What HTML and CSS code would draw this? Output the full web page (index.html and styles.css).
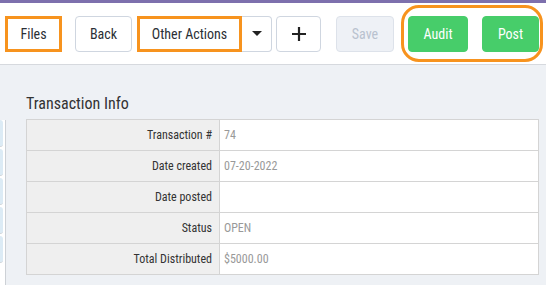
FILE: index.html
```html
<!DOCTYPE html>
<html lang="en">
<head>
    <meta charset="UTF-8">
    <title>Transaction</title>
    <link rel="stylesheet" href="styles.css">
</head>
<body>
    <div class="topbar"></div>
    <div class="toolbar">
        <button class="btn btn-files marked">Files</button>
        <button class="btn btn-back">Back</button>
        <div class="btn-group">
            <button class="btn btn-other marked">Other Actions</button>
            <button class="btn btn-caret"><span class="caret"></span></button>
        </div>
        <button class="btn btn-add">
            <svg width="16" height="16" viewBox="0 0 16 16"><path d="M8 1v14M1 8h14" stroke="#222" stroke-width="2.2" fill="none"/></svg>
        </button>
        <button class="btn btn-save" disabled>Save</button>
        <div class="highlight-group">
            <button class="btn btn-green btn-audit">Audit</button>
            <button class="btn btn-green btn-post">Post</button>
        </div>
    </div>

    <div class="main">
        <div class="side-list">
            <div class="side-item"></div>
            <div class="side-item"></div>
            <div class="side-item"></div>
            <div class="side-item"></div>
            <div class="side-item"></div>
        </div>

        <div class="content">
            <h2>Transaction Info</h2>
            <table class="info-table">
                <tr><th>Transaction #</th><td>74</td></tr>
                <tr><th>Date created</th><td>07-20-2022</td></tr>
                <tr><th>Date posted</th><td></td></tr>
                <tr><th>Status</th><td>OPEN</td></tr>
                <tr><th>Total Distributed</th><td>$5000.00</td></tr>
            </table>
        </div>
    </div>
</body>
</html>
```

FILE: styles.css
```css
body {
    margin: 0;
    font-family: "Roboto Condensed", "Liberation Sans Narrow", "DejaVu Sans Condensed", Roboto, sans-serif;
    font-stretch: condensed;
    background-color: #eef1f5;
    height: 285px;
    overflow: hidden;
}

.topbar {
    height: 3px;
    background-color: #7d70ad;
}

.toolbar {
    display: flex;
    align-items: center;
    height: 61px;
    padding-left: 5px;
    background: #fff;
    border-bottom: 1px solid #d6d9de;
}

.btn {
    height: 36px;
    padding: 0;
    font-family: inherit;
    font-size: 14px;
    color: #2b2f36;
    background: #fff;
    border: 1px solid #cfd6e0;
    border-radius: 4px;
    box-sizing: border-box;
    cursor: pointer;
}

.btn.marked {
    border: 3px solid #f7931e;
    border-radius: 0;
}

.btn-files {
    width: 57px;
}

.btn-back {
    width: 57px;
    margin-left: 13px;
}

.btn-group {
    display: flex;
    margin-left: 5px;
}

.btn-other {
    width: 105px;
}

.btn-caret {
    width: 30px;
    border-left: none;
    border-radius: 0 4px 4px 0;
    display: flex;
    align-items: center;
    justify-content: center;
}

.caret {
    width: 0;
    height: 0;
    border-left: 5px solid transparent;
    border-right: 5px solid transparent;
    border-top: 5px solid #222;
}

.btn-add {
    width: 45px;
    margin-left: 4px;
    display: flex;
    align-items: center;
    justify-content: center;
}

.btn-save {
    width: 58px;
    margin-left: 15px;
    background: #eef1f6;
    color: #b9c2cf;
    border-color: #dde2ea;
}

.highlight-group {
    display: flex;
    margin-left: 7px;
    padding: 8px 1px 7px 4px;
    border: 3px solid #f7931e;
    border-radius: 18px;
}

.btn-green {
    background: #47cd6a;
    border-color: #47cd6a;
    color: #fff;
}

.btn-audit {
    width: 60px;
}

.btn-post {
    width: 57px;
    margin-left: 14px;
}

.main {
    display: flex;
    align-items: flex-start;
}

.side-list {
    width: 5px;
    margin-top: 55px;
    height: 165px;
    background: #fff;
    border-right: 1px solid #cdd1d6;
}

.side-item {
    height: 26px;
    margin-bottom: 2px;
    width: 3px;
    background: #dcebf5;
    border-radius: 0 3px 3px 0;
    border-bottom: 1px solid #cfd3d8;
}

.content {
    padding-left: 20px;
}

.content h2 {
    margin: 29px 0 6px;
    font-size: 16px;
    font-weight: normal;
    line-height: 19px;
    color: #333;
}

.info-table {
    width: 513px;
    border-collapse: collapse;
    background: #fff;
    font-size: 12px;
}

.info-table th,
.info-table td {
    height: 30px;
    padding: 0;
    border: 1px solid #d4d4d4;
}

.info-table th {
    width: 185px;
    padding-right: 7px;
    text-align: right;
    font-weight: normal;
    color: #333;
    background: #efefef;
}

.info-table td {
    padding-left: 4px;
    color: #999;
}
```
